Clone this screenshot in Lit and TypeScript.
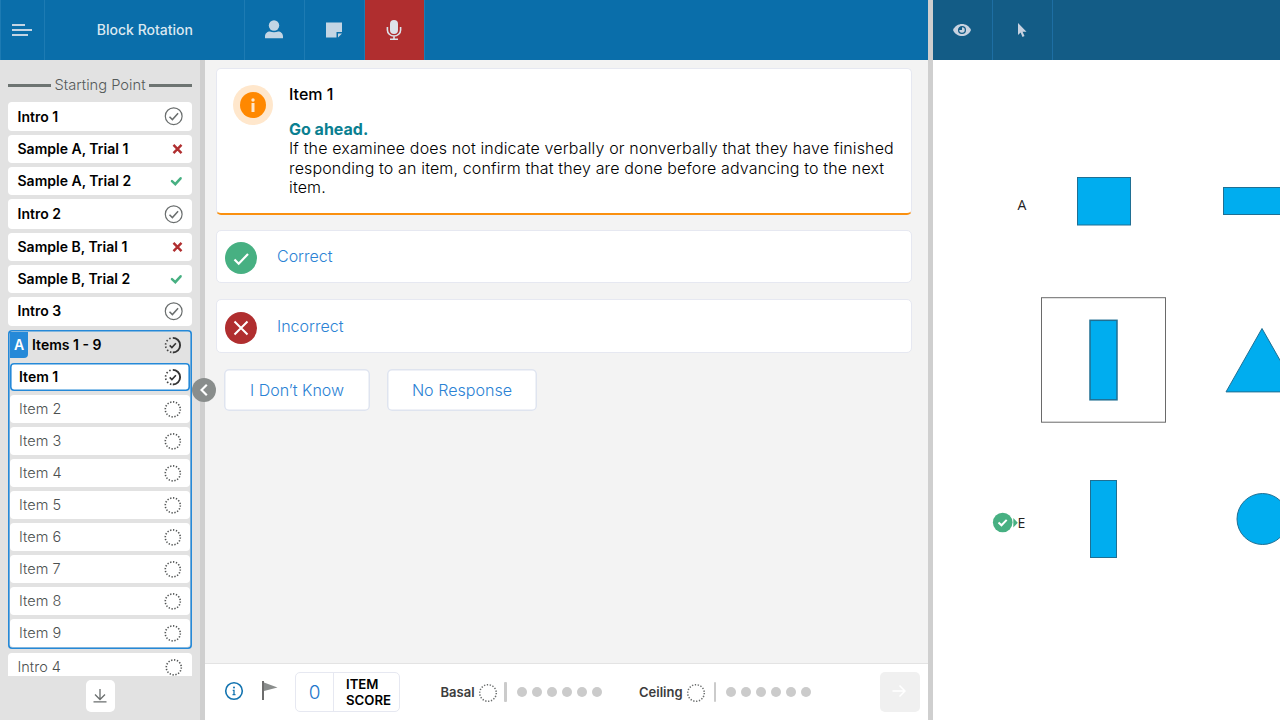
import { LitElement, html, svg, css } from "lit";
import { customElement, property } from "lit/decorators.js";

type Status = "done" | "wrong" | "right" | "progress" | "empty";

@customElement("status-icon")
export class StatusIcon extends LitElement {
  @property() status: Status = "empty";

  static styles = css`
    :host { display: block; width: 20px; height: 20px; flex: none; }
    .icon { display: block; width: 20px; height: 20px; fill: none; }
  `;

  private shape() {
    switch (this.status) {
      case "done":
        return svg`<circle cx="9.700" cy="10.200" r="8.400" stroke="#6a6e6e" stroke-width="1.200"/>
          <path d="M5.500 10.700l2.900 2.900 5.700-6.400" stroke="#6a6e6e" stroke-width="1.500"/>`;
      case "wrong":
        return svg`<path d="M9.500 5.800l8 8.400M17.500 5.800l-8 8.400" stroke="#b02e2f" stroke-width="2.400"/>`;
      case "right":
        return svg`<path d="M8 10.200l3.300 3 5.300-5.900" stroke="#47b082" stroke-width="2.500" stroke-linecap="round"/>`;
      case "progress":
        return svg`<path d="M9.800 2.900a7.300 7.300 0 0 1 0 14.600" stroke="#333" stroke-width="1.900"/>
          <path d="M8.400 17.300a7.300 7.300 0 0 1 .6-14.400" stroke="#444" stroke-width="1.700" stroke-dasharray="1.500 1.950"/>
          <path d="M6.700 10.400l2.200 2.100 4-4.200" stroke="#333" stroke-width="1.600"/>`;
      default:
        return svg`<circle cx="9.800" cy="10.400" r="7.500" stroke="#505353" stroke-width="1.600" stroke-dasharray="1.300 1.645"/>`;
    }
  }

  render() {
    return html`<svg class="icon" viewBox="0 0 20 20">${this.shape()}</svg>`;
  }
}

@customElement("app-root")
export class AppRoot extends LitElement {
  static styles = css`
    :host { display: flex; width: 1280px; height: 720px; overflow: hidden; box-sizing: border-box;
      font-family: Inter, "Liberation Sans", sans-serif; color: #000; background: #fff; }
    * { box-sizing: border-box; }
    svg { display: block; fill: none; flex: none; }

    .left { width: 928px; display: flex; flex-direction: column; flex: none; }
    .bar { height: 60px; display: flex; background: #0a6eaa; flex: none; }
    .cell { display: flex; align-items: center; justify-content: center; border-left: 1px solid #1d7bb3; width: 60px; padding-right: 2px; }
    .cell.menu { width: 44px; }
    .cell.title { width: 200px; font-size: 14px; font-weight: 500; color: #dbe8f1; padding: 0 0 2px 0.8px; }
    .cell.mic { background: #b02e2f; padding-right: 1px; }
    .cell.rest { flex: 1; }

    .body { display: flex; flex: 1; min-height: 0; }
    .side { width: 200px; background: #e2e2e2; display: flex; flex-direction: column; align-items: center; flex: none; }
    .list { width: 184px; height: 616px; overflow: hidden; display: flex; flex-direction: column; gap: 4px; padding-top: 14.5px; }
    .start { height: 23px; display: flex; align-items: center; justify-content: space-between; padding-bottom: 2px;
      font-size: 14.7px; font-weight: 300; color: #555a5a; flex: none; line-height: 20px; }
    .rule { width: 42.5px; height: 3px; background: #6d7472; }
    .row { display: flex; align-items: center; justify-content: space-between; height: 28px; background: #fff; border-radius: 4px;
      padding: 0 8px 0 9.5px; font-size: 14px; font-weight: 600; flex: none; }
    .row span { padding-bottom: 0.6px; }
    .row.intro { height: 29.5px; }
    .row.intro span { padding-bottom: 0; }
    .row.intro.third span { padding-bottom: 1px; }
    .row.pending { font-weight: 300; font-size: 14.5px; color: #4c5050; }
    .group { box-shadow: inset 0 0 0 1.6px #2589d8; border-radius: 4px; height: 319px; display: flex; flex-direction: column; gap: 4px; padding: 1px 2px 0; flex: none; }
    .group .row { padding: 0 7px 0 9px; }
    .group .row.head { background: none; padding-left: 0; }
    .headname { display: flex; align-items: center; gap: 4px; }
    .tag { width: 18px; height: 26px; background: #2589d8; color: #fff; display: flex; align-items: center; justify-content: center; border-radius: 0 0 4px 0; font-size: 14px; padding-bottom: 0.6px; }
    .group .row.current { box-shadow: inset 0 0 0 1.6px #2589d8; }
    .foot { display: flex; align-items: center; justify-content: center; width: 29px; height: 32px; margin-top: 4px; background: #fff; border-radius: 5px; }
    .split { width: 5px; background: #cfcfcf; position: relative; flex: none; }
    .handle { position: absolute; left: -7.7px; top: 317.6px; width: 24px; height: 24px; border-radius: 50%; background: #898d8c; z-index: 1; display: flex; align-items: center; justify-content: center; }

    .main { flex: 1; display: flex; flex-direction: column; background: #f3f3f3; min-width: 0; }
    .content { flex: 1; padding: 8px 16px 0 11px; }
    .card { background: #fff; border: 1px solid #e6e8f1; border-radius: 5px; }
    .note { height: 147px; border-bottom: 2px solid #fa900f; display: flex; padding: 16px 0 0 16px; }
    .halo { width: 40px; height: 40px; border-radius: 50%; background: #ffe7cc; display: flex; align-items: center; justify-content: center; flex: none; }
    .text { margin-left: 16px; font-size: 16px; line-height: 19.4px; font-weight: 300; }
    .name { font-weight: 500; font-size: 16px; line-height: 19px; margin-bottom: 16px; }
    .go { font-weight: 700; color: #0b7f91; }
    .line { white-space: nowrap; letter-spacing: 0.145px; }
    .answer { height: 53px; margin-top: 15px; display: flex; align-items: center; padding: 0 0 1px 7.8px; color: #2b82d4; font-size: 16px; font-weight: 300; gap: 20.2px; }
    .answer.second { margin-top: 16px; height: 54px; padding-bottom: 0; }
    .answer svg { margin-top: 4px; }
    .buttons { display: flex; gap: 17px; padding: 16px 0 0 8px; }
    .btn { height: 42px; width: 146px; display: flex; align-items: center; justify-content: center; background: #fff; box-shadow: inset 0 0 0 1.5px #dfe4ef; border-radius: 5px; color: #2b82d4; font-size: 16px; font-weight: 300; }
    .btn.wide { width: 150px; font-size: 16.1px; }

    .tray { height: 57px; background: #fff; border-top: 1px solid #e3e3e3; display: flex; padding: 8px 8px 0 19px; flex: none; }
    .tray .info { margin-top: 8.5px; }
    .tray .flag { margin: 9px 0 0 18px; }
    .score { width: 105px; height: 40px; margin-left: 17px; border: 1px solid #e6e8f1; border-radius: 5px; display: flex; }
    .num { width: 38px; border-right: 1px solid #e6e8f1; display: flex; align-items: center; justify-content: center; font-size: 19px; font-weight: 300; color: #1f78cc; }
    .label { font-size: 13.2px; font-weight: 600; line-height: 16px; padding: 3px 0 0 12px; }
    .meter { display: flex; align-items: center; height: 40px; font-size: 13px; font-weight: 600; color: #3c3c3c; }
    .meter.basal { margin-left: 40.5px; width: 198.5px; }
    .meter.ceil { width: 241px; }
    .word { width: 37px; }
    .ceil .word { width: 46.5px; }
    .tick { width: 3px; height: 20px; background: #cbcbcb; border-radius: 1px; margin: 0 9.5px 0 6.5px; }
    .ceil .tick { width: 2px; margin: 0 10.4px 0 8px; }
    .dots { display: flex; gap: 5px; }
    .dot { width: 10px; height: 10px; border-radius: 50%; background: #cbcbcb; }
    .next { width: 40px; height: 40px; background: #f0f0f0; border-radius: 5px; display: flex; align-items: center; justify-content: center; padding: 0 1.5px 2px 0; }

    .right { flex: 1; display: flex; flex-direction: column; min-width: 0; }
    .right .bar { background: #135c86; }
    .right .cell { border-left: 0; border-right: 1px solid #1d6ea3; padding-right: 1px; }
    .shapes { font-family: "Open Sans", "Noto Sans", sans-serif; font-size: 14px; }
  `;

  private row(name: string, status: Status, cls = "") {
    return html`<div class="row ${cls}"><span>${name}</span><status-icon .status=${status}></status-icon></div>`;
  }

  private dots() {
    return html`<div class="tick"></div><div class="dots">${[0, 1, 2, 3, 4, 5].map(() => html`<div class="dot"></div>`)}</div>`;
  }

  render() {
    return html`
      <div class="left">
        <div class="bar">
          <div class="cell menu"><svg width="20" height="12" viewBox="0 0 20 12"><path d="M0 1h13M0 6h20M0 11h16" stroke="#c3d5e4" stroke-width="2"/></svg></div>
          <div class="cell title">Block Rotation</div>
          <div class="cell"><svg width="18" height="20" viewBox="0 0 18 20"><circle cx="9" cy="5.500" r="5.200" fill="#c3d5e4"/><path d="M0 17.800v-1.400C0 13.400 2.200 11.400 5 11.400c1 .5 2.400 .8 4 .8s3-.3 4-.8c2.800 0 5 2 5 5v1.400q0 .5-.5 .5h-17q-.5 0-.5-.5z" fill="#c3d5e4"/></svg></div>
          <div class="cell"><svg width="16" height="16" viewBox="0 0 16 16"><path d="M0 .5h16v9.500h-5.500v5.500H0z" fill="#c3d5e4"/><path d="M12 15.500v-4h4z" fill="#c3d5e4"/></svg></div>
          <div class="cell mic"><svg width="16" height="20" viewBox="0 0 16 20"><rect x="4" y="0" width="8" height="14" rx="4" fill="#dde3ea"/><path d="M1.400 7v3a6.600 6 0 0 0 13.200 0V7M8 16v3M4 19.200h8" stroke="#dde3ea" stroke-width="1.600"/></svg></div>
          <div class="cell rest"></div>
        </div>
        <div class="body">
          <div class="side">
            <div class="list">
              <div class="start"><div class="rule"></div><span>Starting Point</span><div class="rule"></div></div>
              ${this.row("Intro 1", "done", "intro")}
              ${this.row("Sample A, Trial 1", "wrong")}
              ${this.row("Sample A, Trial 2", "right")}
              ${this.row("Intro 2", "done", "intro")}
              ${this.row("Sample B, Trial 1", "wrong")}
              ${this.row("Sample B, Trial 2", "right")}
              ${this.row("Intro 3", "done", "intro third")}
              <div class="group">
                <div class="row head"><div class="headname"><div class="tag">A</div><span>Items 1 - 9</span></div><status-icon .status=${"progress"}></status-icon></div>
                ${this.row("Item 1", "progress", "current")}
                ${[2, 3, 4, 5, 6, 7, 8, 9].map((n) => this.row(`Item ${n}`, "empty", "pending"))}
              </div>
              ${this.row("Intro 4", "empty", "pending last")}
            </div>
            <div class="foot"><svg width="14" height="14" viewBox="0 0 14 14"><path d="M7 0v10.500M2 5.500l5 5 5-5M.5 12.800h13" stroke="#6a6e6e" stroke-width="1.300"/></svg></div>
          </div>
          <div class="split"><div class="handle"><svg width="8" height="12" viewBox="0 0 8 12"><path d="M6.800 .8L1.500 6l5.300 5.200" stroke="#fff" stroke-width="2.200"/></svg></div></div>
          <div class="main">
            <div class="content">
              <div class="card note">
                <div class="halo"><svg width="26" height="26" viewBox="0 0 26 26"><circle cx="13" cy="13" r="13" fill="#ff8800"/><circle cx="13" cy="8" r="1.700" fill="#ffe7cc"/><path d="M13 11v9" stroke="#ffe7cc" stroke-width="3"/></svg></div>
                <div class="text">
                  <div class="name">Item 1</div>
                  <div class="go">Go ahead.</div>
                  <div class="line">If the examinee does not indicate verbally or nonverbally that they have finished</div>
                  <div class="line">responding to an item, confirm that they are done before advancing to the next</div>
                  <div class="line">item.</div>
                </div>
              </div>
              <div class="card answer"><svg width="32" height="32" viewBox="0 0 32 32"><circle cx="16" cy="16" r="16" fill="#47b082"/><path d="M9.500 17.500l4.200 4.200 9.300-9.700" stroke="#fff" stroke-width="2.200"/></svg>Correct</div>
              <div class="card answer second"><svg width="32" height="32" viewBox="0 0 32 32"><circle cx="16" cy="16" r="16" fill="#b02e2f"/><path d="M9.500 9.500l13 13M22.500 9.500l-13 13" stroke="#fff" stroke-width="2"/></svg>Incorrect</div>
              <div class="buttons"><div class="btn">I Don’t Know</div><div class="btn wide">No Response</div></div>
            </div>
            <div class="tray">
              <svg class="info" width="20" height="20" viewBox="0 0 20 20"><circle cx="10" cy="10" r="8.300" stroke="#1474b0" stroke-width="1.600"/><circle cx="10" cy="6.600" r="1" fill="#1474b0"/><path d="M8.700 9.300H10v4.400M8.500 13.700h3" stroke="#1474b0" stroke-width="1.300"/></svg>
              <svg class="flag" width="16" height="19" viewBox="0 0 16 19"><path d="M1 0v19" stroke="#6d6d6d" stroke-width="2"/><path d="M2 1.500l13.500 4.900L2 10z" fill="#8a8d8c"/></svg>
              <div class="score"><div class="num">0</div><div class="label">ITEM<br>SCORE</div></div>
              <div class="meter basal"><span class="word">Basal</span><svg width="20" height="20" viewBox="0 0 20 20"><circle cx="10" cy="11" r="8.300" stroke="#6a6d6d" stroke-width="1.500" stroke-dasharray="1.300 1.597"/></svg>${this.dots()}</div>
              <div class="meter ceil"><span class="word">Ceiling</span><svg width="20" height="20" viewBox="0 0 20 20"><circle cx="10" cy="11" r="8.300" stroke="#6a6d6d" stroke-width="1.500" stroke-dasharray="1.300 1.597"/></svg>${this.dots()}</div>
              <div class="next"><svg width="14" height="14" viewBox="0 0 14 14"><path d="M.5 7h12M7.500 1.500L13 7l-5.500 5.500" stroke="#fff" stroke-width="1.500"/></svg></div>
            </div>
          </div>
        </div>
      </div>
      <div class="split"></div>
      <div class="right">
        <div class="bar">
          <div class="cell"><svg width="18" height="12" viewBox="0 0 18 12"><path d="M0 6C3.500-2 14.500-2 18 6 14.500 14 3.500 14 0 6z" fill="#c8d2e0"/><circle cx="9" cy="6" r="3.400" stroke="#135c86" stroke-width="1.300"/><path d="M9 6V2.800A3.200 3.200 0 0 0 5.800 6z" fill="#135c86"/></svg></div>
          <div class="cell"><svg width="10" height="16" viewBox="0 0 10 16"><path d="M1 1v12l2.600-2.600 1.900 4.600 2-.9-1.900-4.300H9.500z" fill="#c8d2e0"/></svg></div>
        </div>
        <svg class="shapes" width="347" height="660" viewBox="933 60 347 660">
          <g fill="#00adef" stroke="#1f6f93" stroke-width="1">
            <rect x="1077.500" y="177.500" width="53" height="47.500"/>
            <rect x="1223.500" y="187.500" width="80" height="27"/>
            <rect x="1090" y="320.300" width="27" height="79.500" stroke-width="1.500"/>
            <path d="M1262 328.500L1226 391.900h72z"/>
            <rect x="1090.500" y="480.500" width="26" height="77"/>
            <circle cx="1262.500" cy="519" r="25.500"/>
          </g>
          <rect x="1041.500" y="297.700" width="124" height="124.500" fill="none" stroke="#6a6a6a"/>
          <text x="1017.500" y="210" fill="#222">A</text>
          <text x="1017.500" y="528" fill="#222">E</text>
          <circle cx="1002.700" cy="522.500" r="9.800" fill="#47b082"/>
          <path d="M998.500 522.500l3 2.800 5.200-5.400" stroke="#fff" stroke-width="2"/>
          <path d="M1013.300 518v9.500l4.500-4.700z" fill="#47b082"/>
        </svg>
      </div>
    `;
  }
}
